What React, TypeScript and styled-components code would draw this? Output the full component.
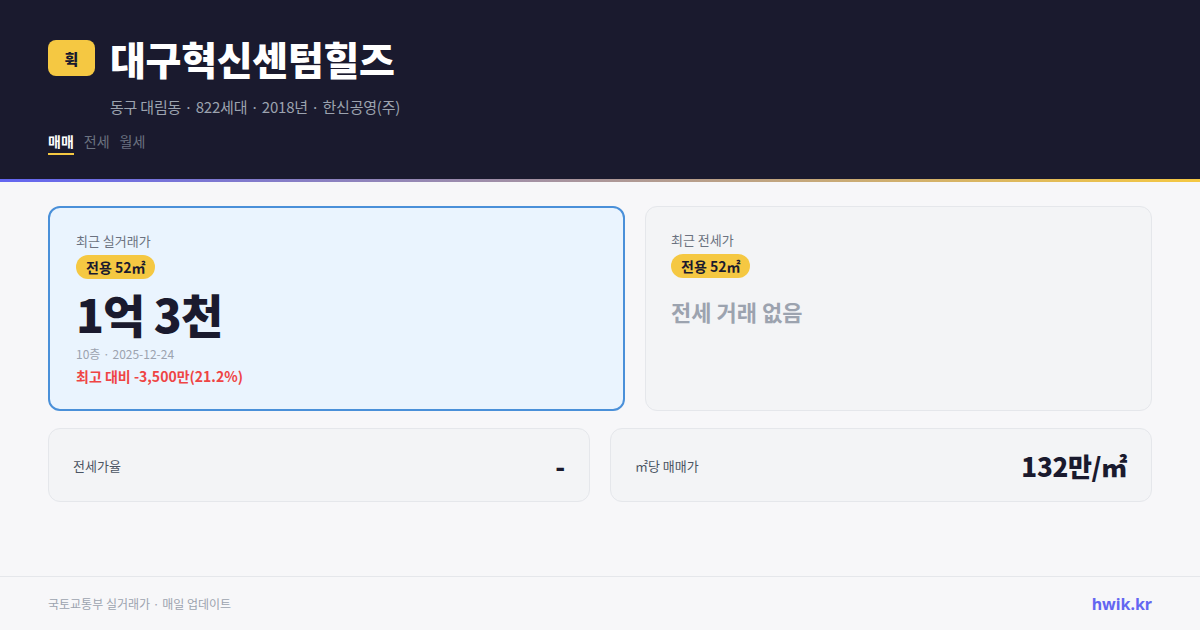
import React from "react";
import styled, { createGlobalStyle } from "styled-components";

const Global = createGlobalStyle`
  html, body { margin: 0; padding: 0; }
  body {
    font-family: "Noto Sans CJK KR", "Noto Sans", sans-serif;
    background: #f7f7f9;
  }
  * { box-sizing: border-box; }
`;

const Page = styled.div`
  width: 1200px;
  height: 630px;
  display: flex;
  flex-direction: column;
  background: #f7f7f9;
  overflow: hidden;
`;

const Header = styled.header`
  background: #1a1a2e;
  padding: 35px 48px 0;
  height: 182px;
  border-bottom: 3px solid transparent;
  border-image: linear-gradient(90deg, #6366f1, #f5c842) 1;
  flex-shrink: 0;
`;

const TitleRow = styled.div`
  display: flex;
  align-items: center;
  gap: 15px;
`;

const Logo = styled.div`
  width: 47px;
  height: 36px;
  border-radius: 8px;
  background: #f5c842;
  color: #1a1a2e;
  display: flex;
  align-items: center;
  justify-content: center;
  font-size: 15px;
  font-weight: 900;
`;

const Title = styled.h1`
  margin: 0;
  color: #ffffff;
  font-size: 39px;
  font-weight: 900;
  letter-spacing: -0.3px;
  line-height: 46px;
`;

const Sub = styled.div`
  margin: 15px 0 0 62px;
  color: #9ca3af;
  font-size: 15px;
  letter-spacing: -0.2px;
  line-height: 22px;
`;

const Tabs = styled.div`
  display: flex;
  gap: 10px;
  margin-top: 13px;
`;

const Tab = styled.div<{ $active?: boolean }>`
  font-size: 14px;
  line-height: 20px;
  padding-bottom: 2px;
  font-weight: ${(p) => (p.$active ? 700 : 400)};
  color: ${(p) => (p.$active ? "#ffffff" : "#6b7280")};
  border-bottom: 2px solid ${(p) => (p.$active ? "#f5c842" : "transparent")};
`;

const Main = styled.main`
  flex: 1;
  padding: 24px 48px 0;
  display: flex;
  flex-direction: column;
  gap: 18px;
`;

const TopRow = styled.div`
  display: grid;
  grid-template-columns: 577fr 507fr;
  gap: 20px;
  height: 204px;
`;

const PriceCard = styled.div<{ $highlight?: boolean }>`
  border-radius: 12px;
  background: ${(p) => (p.$highlight ? "#eaf4fe" : "#f3f4f6")};
  border: ${(p) => (p.$highlight ? "2px solid #4a90d9" : "1px solid #e5e7eb")};
  padding: ${(p) => (p.$highlight ? "23px 26px" : "23px 25px")};
  display: flex;
  flex-direction: column;
  align-items: flex-start;
`;

const Label = styled.div`
  font-size: 13px;
  line-height: 20px;
  color: #6b7280;
`;

const Badge = styled.div`
  margin-top: 4px;
  background: #f5c842;
  color: #1a1a2e;
  font-size: 14px;
  font-weight: 700;
  line-height: 24px;
  padding: 0 10px;
  border-radius: 12px;
`;

const BigPrice = styled.div`
  margin-top: 4px;
  font-size: 46px;
  font-weight: 900;
  color: #1a1a2e;
  letter-spacing: -1px;
  line-height: 60px;
`;

const Meta = styled.div`
  margin-top: 2px;
  font-size: 12px;
  line-height: 18px;
  color: #9ca3af;
`;

const Diff = styled.div`
  margin-top: 3px;
  font-size: 14px;
  line-height: 20px;
  font-weight: 700;
  color: #ef4444;
`;

const Empty = styled.div`
  margin-top: 18px;
  font-size: 22px;
  font-weight: 700;
  color: #9ca3af;
  line-height: 30px;
`;

const BottomRow = styled.div`
  display: grid;
  grid-template-columns: 1fr 1fr;
  gap: 20px;
`;

const StatCard = styled.div`
  height: 74px;
  border-radius: 12px;
  background: #f3f4f6;
  border: 1px solid #e5e7eb;
  padding: 0 24px;
  display: flex;
  align-items: center;
  justify-content: space-between;
`;

const StatLabel = styled.div`
  font-size: 13px;
  color: #4b5563;
`;

const StatValue = styled.div`
  font-size: 26px;
  font-weight: 900;
  color: #1a1a2e;
  letter-spacing: -0.3px;
`;

const Footer = styled.footer`
  height: 54px;
  flex-shrink: 0;
  border-top: 1px solid #e5e7eb;
  padding: 0 48px;
  display: flex;
  align-items: center;
  justify-content: space-between;
`;

const FootText = styled.div`
  font-size: 12px;
  color: #9ca3af;
`;

const Brand = styled.div`
  font-size: 16px;
  font-weight: 700;
  color: #6366f1;
  font-family: "Noto Sans", sans-serif;
`;

export default function App() {
  return (
    <Page>
      <Global />
      <Header>
        <TitleRow>
          <Logo>휙</Logo>
          <Title>대구혁신센텀힐즈</Title>
        </TitleRow>
        <Sub>동구 대림동 · 822세대 · 2018년 · 한신공영(주)</Sub>
        <Tabs>
          <Tab $active>매매</Tab>
          <Tab>전세</Tab>
          <Tab>월세</Tab>
        </Tabs>
      </Header>
      <Main>
        <TopRow>
          <PriceCard $highlight>
            <Label>최근 실거래가</Label>
            <Badge>전용 52㎡</Badge>
            <BigPrice>1억 3천</BigPrice>
            <Meta>10층 · 2025-12-24</Meta>
            <Diff>최고 대비 -3,500만(21.2%)</Diff>
          </PriceCard>
          <PriceCard>
            <Label>최근 전세가</Label>
            <Badge>전용 52㎡</Badge>
            <Empty>전세 거래 없음</Empty>
          </PriceCard>
        </TopRow>
        <BottomRow>
          <StatCard>
            <StatLabel>전세가율</StatLabel>
            <StatValue>-</StatValue>
          </StatCard>
          <StatCard>
            <StatLabel>㎡당 매매가</StatLabel>
            <StatValue>132만/㎡</StatValue>
          </StatCard>
        </BottomRow>
      </Main>
      <Footer>
        <FootText>국토교통부 실거래가 · 매일 업데이트</FootText>
        <Brand>hwik.kr</Brand>
      </Footer>
    </Page>
  );
}
